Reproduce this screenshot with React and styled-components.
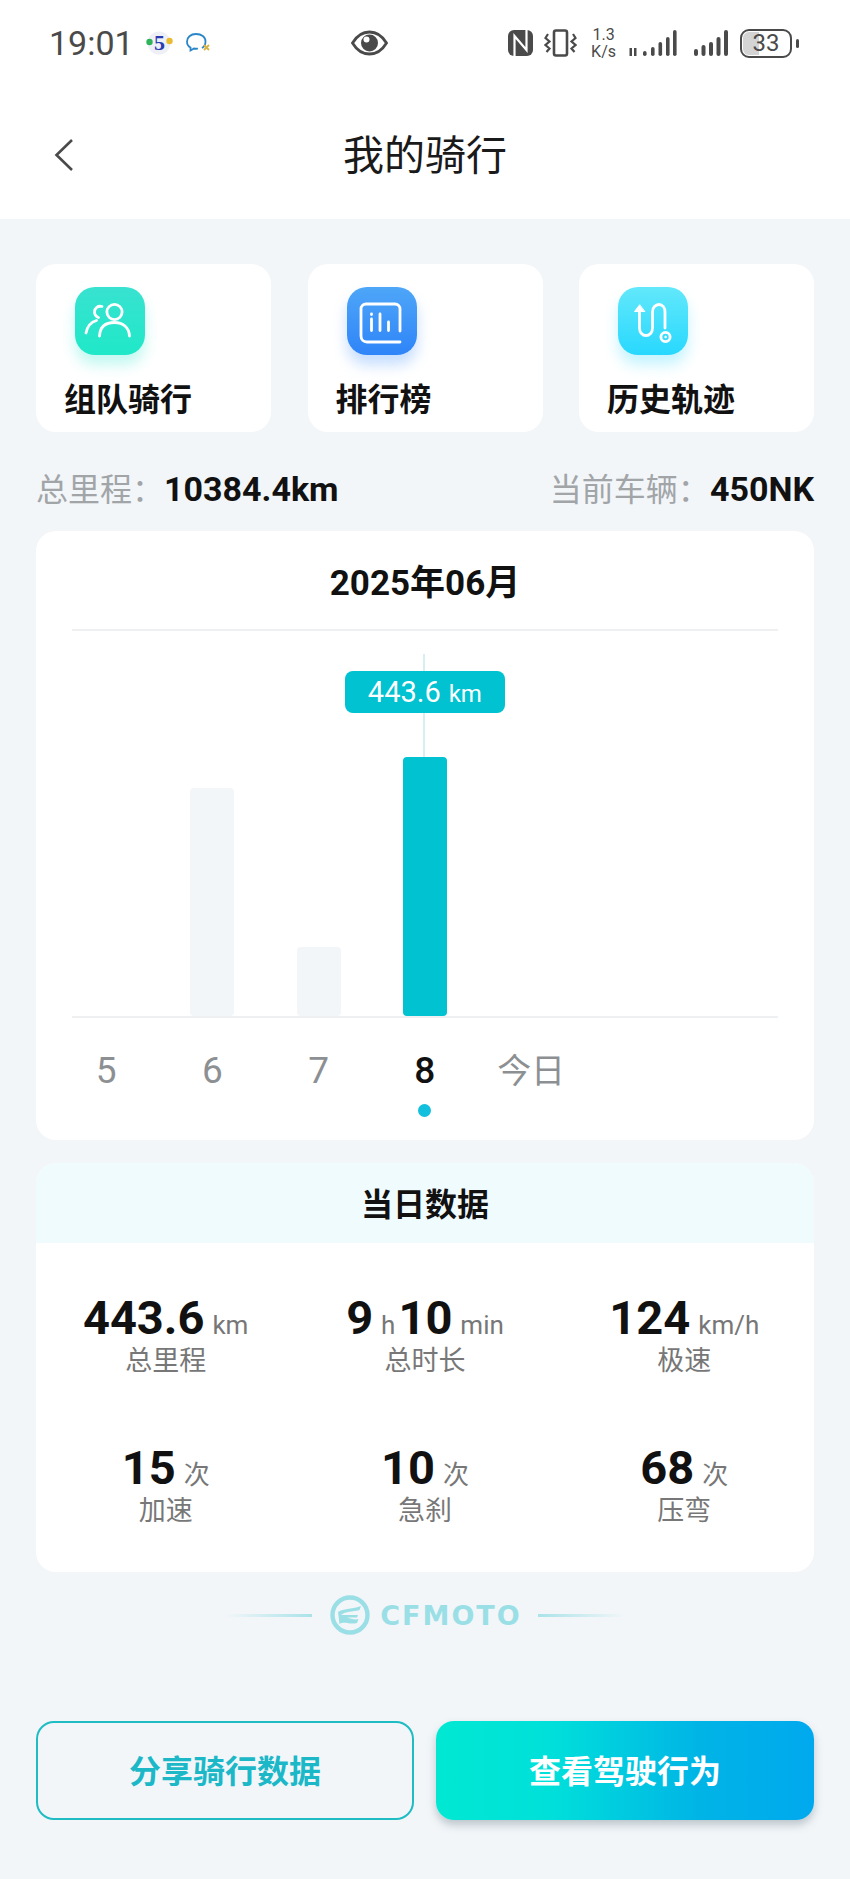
import React from "react";
import styled, { createGlobalStyle } from "styled-components";

const GlobalStyle = createGlobalStyle`
  html, body {
    margin: 0;
    padding: 0;
    background: #f2f6f9;
  }
  * {
    box-sizing: border-box;
  }
`;

const shortcuts = [
  { label: "组队骑行", kind: "group" },
  { label: "排行榜", kind: "rank" },
  { label: "历史轨迹", kind: "route" },
];

const bars = [
  { day: "5", height: 0 },
  { day: "6", height: 228 },
  { day: "7", height: 69 },
  { day: "8", height: 259, active: true },
  { day: "今日", height: 0, wide: true },
];

const stats = [
  { parts: [["443.6", "km"]], label: "总里程" },
  { parts: [["9", "h"], ["10", "min"]], label: "总时长" },
  { parts: [["124", "km/h"]], label: "极速" },
  { parts: [["15", "次"]], label: "加速" },
  { parts: [["10", "次"]], label: "急刹" },
  { parts: [["68", "次"]], label: "压弯" },
];

const gradients = {
  group: "linear-gradient(180deg, #38e2d0, #20e8c8)",
  rank: "linear-gradient(180deg, #4ea6f8, #2f84f8)",
  route: "linear-gradient(180deg, #62e8fb, #28d8fe)",
};

const glows = {
  group: "rgba(40, 230, 205, 0.28)",
  rank: "rgba(50, 135, 250, 0.28)",
  route: "rgba(45, 215, 255, 0.28)",
};

const ShortcutGlyph = ({ kind }) => {
  if (kind === "group") {
    return (
      <svg width="70" height="68" viewBox="0 0 70 68" fill="none" stroke="#fff" strokeWidth="2.8" strokeLinecap="round">
        <circle cx="39.5" cy="25" r="7.6" />
        <path d="M24.5 49C25 39.5 31 35.5 39.5 35.5C48 35.5 54 40.5 54.5 49" />
        <path d="M27 19.5C23 18.5 19.5 21 19.5 25C19.5 27.5 21 29.5 23.5 30.5" />
        <path d="M11 46C12.5 38.5 16 35 21.5 33.5" />
      </svg>
    );
  }
  if (kind === "rank") {
    return (
      <svg width="70" height="68" viewBox="0 0 70 68" fill="none" stroke="#fff" strokeWidth="2.8" strokeLinecap="round">
        <path d="M53 44V22C53 19 51 17 48 17H19C16 17 14 19 14 22V49C14 52.5 16.5 55 20 55H53" />
        <path d="M24.5 32V43.5M33 27V43.5M41.5 35V43.5" />
        <path d="M24.5 27V27.5" />
      </svg>
    );
  }
  return (
    <svg width="70" height="68" viewBox="0 0 70 68" fill="none" stroke="#fff" strokeWidth="2.8" strokeLinecap="round">
      <path d="M21.5 24V41C21.5 45.5 24.5 48.5 28 48.5C31.5 48.5 34.5 45.5 34.5 41V25C34.5 20.5 37.5 17.5 41 17.5C44.5 17.5 47 20.5 47 25V41" />
      <path d="M21.5 18L16.5 24.5H26.5Z" fill="#fff" strokeWidth="1" strokeLinejoin="round" />
      <circle cx="47.5" cy="50" r="4.6" />
      <circle cx="47.5" cy="50" r="0.8" fill="#fff" strokeWidth="1" />
    </svg>
  );
};

const StatusIcons = () => (
  <StatusRight>
    <StatusGlyph $gap={0}>
      <svg width="25" height="26" viewBox="0 0 25 26">
        <rect x="0" y="0" width="25" height="26" rx="6" fill="#4a4a4a" />
        <path d="M6.5 26V6L18.5 20V0" fill="none" stroke="#fff" strokeWidth="2.2" />
      </svg>
    </StatusGlyph>
    <StatusGlyph $gap={11}>
      <svg width="33" height="28" viewBox="0 0 33 28" fill="none" stroke="#4a4a4a">
        <rect x="10" y="1.5" width="13" height="25" rx="2" strokeWidth="2.6" />
        <path d="M4 5L1.5 9L5.5 12.5L1.5 16L5.5 19.5L2.5 23M29 5L31.5 9L27.5 12.5L31.5 16L27.5 19.5L30.5 23" strokeWidth="2.2" />
      </svg>
    </StatusGlyph>
    <StatusGlyph $gap={14}>
      <NetSpeed>
        <span>1.3</span>
        <span>K/s</span>
      </NetSpeed>
    </StatusGlyph>
    <StatusGlyph $gap={13}>
      <svg width="48" height="28" viewBox="0 0 48 28" fill="#4a4a4a">
        <rect x="0.5" y="19" width="2.5" height="8" />
        <rect x="5" y="19" width="2.5" height="8" />
        <rect x="14" y="22" width="3.6" height="5" rx="1.8" />
        <rect x="22" y="18" width="3.6" height="9" rx="1.8" />
        <rect x="29.5" y="13" width="3.6" height="14" rx="1.8" />
        <rect x="37" y="8" width="3.6" height="19" rx="1.8" />
        <rect x="44" y="1" width="3.6" height="26" rx="1.8" />
      </svg>
    </StatusGlyph>
    <StatusGlyph $gap={17}>
      <svg width="35" height="28" viewBox="0 0 35 28" fill="#4a4a4a">
        <rect x="0" y="20" width="4" height="7" rx="2" />
        <rect x="7.5" y="16" width="4" height="11" rx="2" />
        <rect x="15" y="13" width="4" height="14" rx="2" />
        <rect x="22.5" y="8" width="4" height="19" rx="2" />
        <rect x="30" y="1" width="4" height="26" rx="2" />
      </svg>
    </StatusGlyph>
    <StatusGlyph $gap={11}>
      <Battery>
        <BatteryFill />
        <BatteryLevel>33</BatteryLevel>
        <BatteryNub />
      </Battery>
    </StatusGlyph>
  </StatusRight>
);

const App = () => {
  return (
    <Page>
      <GlobalStyle />
      <Header>
        <StatusBar>
          <StatusLeft>
            <Clock>19:01</Clock>
            <svg width="27" height="26" viewBox="0 0 27 26">
              <circle cx="13" cy="13" r="11.5" fill="#eef0f6" />
              <circle cx="3.5" cy="12" r="3.2" fill="#2fb45a" />
              <circle cx="23.5" cy="11" r="3.2" fill="#e8bb30" />
              <text x="13.5" y="20" textAnchor="middle" fontFamily="Liberation Serif" fontWeight="700" fontSize="22" fill="#2a3bb0">5</text>
            </svg>
            <svg width="25" height="22" viewBox="0 0 25 22" fill="none">
              <path d="M17 16C19.5 14.5 20.5 12 20.5 9.5C20.5 5 16.5 2 11 2C5.5 2 2 5.5 2 9.5C2 12.5 3.5 14.5 5.5 15.5V18.5L9 16.5C10.5 16.8 12 16.8 13 16.5" stroke="#2a86c8" strokeWidth="1.8" />
              <path d="M19 13L24 18M24 13L19 18" stroke="#d9b340" strokeWidth="1.8" />
            </svg>
          </StatusLeft>
          <EyeSlot>
            <svg width="37" height="26" viewBox="0 0 37 26">
              <path d="M1.5 13C6 5.5 12 2 18.5 2C25 2 31 5.5 35.5 13C31 20.5 25 24 18.5 24C12 24 6 20.5 1.5 13Z" fill="none" stroke="#4a4a4a" strokeWidth="2.8" />
              <circle cx="18.5" cy="13" r="8.5" fill="#4a4a4a" />
              <circle cx="15.5" cy="9.5" r="3" fill="#fff" />
            </svg>
          </EyeSlot>
          <StatusIcons />
        </StatusBar>
        <NavBar>
          <BackButton aria-label="返回">
            <svg width="20" height="34" viewBox="0 0 20 34" fill="none">
              <path d="M18 2L2.5 17L18 32" stroke="#4a4a4a" strokeWidth="2.6" />
            </svg>
          </BackButton>
          <Title>我的骑行</Title>
        </NavBar>
      </Header>

      <Main>
        <Shortcuts>
          {shortcuts.map((item) => (
            <Shortcut key={item.kind}>
              <ShortcutIcon $kind={item.kind}>
                <ShortcutGlyph kind={item.kind} />
              </ShortcutIcon>
              <ShortcutLabel>{item.label}</ShortcutLabel>
            </Shortcut>
          ))}
        </Shortcuts>

        <Summary>
          <div>
            <SummaryKey>总里程：</SummaryKey>
            <SummaryValue>10384.4km</SummaryValue>
          </div>
          <div>
            <SummaryKey>当前车辆：</SummaryKey>
            <SummaryValue>450NK</SummaryValue>
          </div>
        </Summary>

        <ChartCard>
          <ChartTitle>2025年06月</ChartTitle>
          <Plot>
            <BarRow>
              {bars.map((bar) => (
                <BarColumn key={bar.day}>
                  <Bar $height={bar.height} $active={bar.active}>
                    {bar.active && (
                      <>
                        <Guide />
                        <Tip>
                          443.6<TipUnit>km</TipUnit>
                        </Tip>
                      </>
                    )}
                  </Bar>
                </BarColumn>
              ))}
            </BarRow>
          </Plot>
          <Days>
            {bars.map((bar) => (
              <Day key={bar.day} $active={bar.active} $wide={bar.wide}>
                {bar.day}
                {bar.active && <DayDot />}
              </Day>
            ))}
          </Days>
        </ChartCard>

        <DataCard>
          <DataHeader>当日数据</DataHeader>
          <StatGrid>
            {stats.map((stat) => (
              <Stat key={stat.label}>
                <StatValue>
                  {stat.parts.map(([num, unit]) => (
                    <StatPart key={unit}>
                      <StatNumber>{num}</StatNumber>
                      <StatUnit>{unit}</StatUnit>
                    </StatPart>
                  ))}
                </StatValue>
                <StatLabel>{stat.label}</StatLabel>
              </Stat>
            ))}
          </StatGrid>
        </DataCard>

        <Brand>
          <BrandLine />
          <svg width="40" height="40" viewBox="0 0 40 40" fill="none">
            <circle cx="20" cy="20" r="17.5" stroke="#9bdfe6" strokeWidth="4.4" />
            <path d="M8 17C14 13 20 15 31 11L29.5 15C22 17 16 16 11 20H28L27 22.5H11.5C16 20.5 22 26 28.5 24L27 28C20 30 15 26 9.5 29Z" fill="#9bdfe6" />
          </svg>
          <BrandName>CFMOTO</BrandName>
          <BrandLine $flip />
        </Brand>

        <Actions>
          <OutlineButton>分享骑行数据</OutlineButton>
          <FilledButton>查看驾驶行为</FilledButton>
        </Actions>
      </Main>
    </Page>
  );
};

export default App;

const Page = styled.div`
  width: 850px;
  height: 1879px;
  overflow: hidden;
  background: #f2f6f9;
  font-family: Roboto, "Noto Sans CJK SC", sans-serif;
  color: #111;
`;

const Header = styled.header`
  background: #fff;
  height: 219px;
`;

const StatusBar = styled.div`
  height: 86px;
  padding: 0 52px 0 49px;
  display: grid;
  grid-template-columns: 302px auto 1fr;
  align-items: center;
`;

const StatusLeft = styled.div`
  display: flex;
  align-items: center;
  gap: 12px;
`;

const Clock = styled.span`
  font-size: 34px;
  color: #4a4a4a;
`;

const EyeSlot = styled.div`
  display: flex;
  align-items: center;
`;

const StatusRight = styled.div`
  display: flex;
  align-items: center;
  justify-content: flex-end;
`;

const StatusGlyph = styled.span`
  display: flex;
  align-items: center;
  margin-left: ${(p) => p.$gap}px;
`;

const NetSpeed = styled.div`
  display: flex;
  flex-direction: column;
  align-items: center;
  font-size: 16px;
  line-height: 17px;
  color: #4a4a4a;
`;

const Battery = styled.div`
  position: relative;
  width: 52px;
  height: 29px;
  border: 2px solid #4a4a4a;
  border-radius: 9px;
  margin-right: 6px;
  display: flex;
  align-items: center;
  justify-content: center;
`;

const BatteryFill = styled.div`
  position: absolute;
  left: 1px;
  top: 1px;
  bottom: 1px;
  width: 33%;
  background: #d4d4d4;
  border-radius: 6px 0 0 6px;
`;

const BatteryLevel = styled.span`
  position: relative;
  font-size: 24px;
  color: #4a4a4a;
`;

const BatteryNub = styled.div`
  position: absolute;
  right: -9px;
  top: 8px;
  width: 3px;
  height: 9px;
  border-radius: 2px;
  background: #4a4a4a;
`;

const NavBar = styled.div`
  position: relative;
  height: 133px;
  padding-bottom: 2px;
  display: flex;
  align-items: center;
  justify-content: center;
`;

const BackButton = styled.div`
  position: absolute;
  left: 54px;
  top: 52px;
  line-height: 0;
`;

const Title = styled.h1`
  margin: 0;
  font-size: 41px;
  font-weight: 400;
  color: #1a1a1a;
`;

const Main = styled.main`
  padding: 45px 36px 0;
`;

const Shortcuts = styled.div`
  display: grid;
  grid-template-columns: repeat(3, 235px);
  justify-content: space-between;
`;

const Shortcut = styled.div`
  height: 168px;
  background: #fff;
  border-radius: 20px;
  padding: 23px 28px 0;
`;

const ShortcutIcon = styled.div`
  width: 70px;
  height: 68px;
  margin-left: 11px;
  border-radius: 20px;
  background: ${(p) => gradients[p.$kind]};
  box-shadow: 0 10px 14px ${(p) => glows[p.$kind]};
`;

const ShortcutLabel = styled.div`
  margin-top: 23px;
  font-size: 32px;
  line-height: 44px;
  font-weight: 700;
  color: #111;
  white-space: nowrap;
`;

const Summary = styled.div`
  height: 99px;
  padding-top: 10px;
  display: flex;
  justify-content: space-between;
  align-items: center;
  white-space: nowrap;
`;

const SummaryKey = styled.span`
  font-size: 32px;
  color: #a2a5a8;
`;

const SummaryValue = styled.span`
  font-size: 34px;
  font-weight: 700;
  color: #111;
`;

const ChartCard = styled.section`
  height: 609px;
  background: #fff;
  border-radius: 20px;
`;

const ChartTitle = styled.div`
  height: 98px;
  padding-bottom: 2px;
  display: flex;
  align-items: center;
  justify-content: center;
  font-size: 35px;
  font-weight: 700;
  color: #111;
`;

const Plot = styled.div`
  height: 389px;
  margin: 0 36px;
  border-top: 2px solid #eef0f2;
  border-bottom: 2px solid #eef0f2;
`;

const BarRow = styled.div`
  height: 100%;
  margin-left: -19px;
  display: flex;
  align-items: flex-end;
`;

const BarColumn = styled.div`
  width: 106.25px;
  flex: none;
  display: flex;
  justify-content: center;
`;

const Bar = styled.div`
  position: relative;
  width: 44px;
  height: ${(p) => p.$height}px;
  border-radius: 4px;
  background: ${(p) => (p.$active ? "#00c2d1" : "#f3f6f9")};
`;

const Guide = styled.div`
  position: absolute;
  left: 50%;
  bottom: 100%;
  width: 2px;
  height: 103px;
  margin-left: -2px;
  background: #d9eef2;
`;

const Tip = styled.div`
  position: absolute;
  left: 50%;
  bottom: calc(100% + 44px);
  transform: translateX(-50%);
  width: 160px;
  height: 42px;
  border-radius: 8px;
  background: #00c2d1;
  color: #fff;
  font-size: 29px;
  line-height: 42px;
  text-align: center;
  white-space: nowrap;
`;

const TipUnit = styled.span`
  font-size: 24px;
  margin-left: 8px;
`;

const Days = styled.div`
  display: flex;
  padding: 28px 0 0 17px;
`;

const Day = styled.div`
  position: relative;
  width: 106.25px;
  flex: none;
  text-align: center;
  font-size: ${(p) => (p.$wide ? 34 : 37)}px;
  line-height: 50px;
  font-weight: ${(p) => (p.$active ? 500 : 400)};
  color: ${(p) => (p.$active ? "#111" : "#8d9093")};
`;

const DayDot = styled.div`
  position: absolute;
  left: 50%;
  top: 58px;
  width: 13px;
  height: 13px;
  margin-left: -6.5px;
  border-radius: 50%;
  background: #12bfdc;
`;

const DataCard = styled.section`
  height: 409px;
  margin-top: 23px;
  background: #fff;
  border-radius: 20px;
  overflow: hidden;
`;

const DataHeader = styled.div`
  height: 80px;
  padding-bottom: 2px;
  background: #f0fbfd;
  display: flex;
  align-items: center;
  justify-content: center;
  font-size: 32px;
  font-weight: 700;
  color: #111;
`;

const StatGrid = styled.div`
  display: grid;
  grid-template-columns: repeat(3, 1fr);
  row-gap: 63px;
  padding-top: 47px;
`;

const Stat = styled.div`
  display: flex;
  flex-direction: column;
  align-items: center;
`;

const StatValue = styled.div`
  display: flex;
  align-items: baseline;
  height: 55px;
  line-height: 56px;
  white-space: nowrap;
`;

const StatPart = styled.span`
  & + & {
    margin-left: 3px;
  }
`;

const StatNumber = styled.span`
  font-size: 47px;
  font-weight: 700;
  color: #111;
`;

const StatUnit = styled.span`
  font-size: 26px;
  color: #777;
  margin-left: 8px;
`;

const StatLabel = styled.div`
  font-size: 27px;
  line-height: 32px;
  color: #777;
`;

const Brand = styled.div`
  height: 40px;
  margin-top: 23px;
  display: flex;
  align-items: center;
  justify-content: center;
  gap: 10px;
`;

const BrandLine = styled.div`
  width: 87px;
  height: 3px;
  margin: ${(p) => (p.$flip ? "0 0 0 6px" : "0 8px 0 0")};
  background: linear-gradient(
    ${(p) => (p.$flip ? "270deg" : "90deg")},
    rgba(155, 223, 230, 0),
    #a9e3e9
  );
`;

const BrandName = styled.span`
  font-family: "DejaVu Sans", sans-serif;
  font-size: 27px;
  font-weight: 700;
  letter-spacing: 2px;
  color: #9bdfe6;
`;

const Actions = styled.div`
  margin-top: 86px;
  display: grid;
  grid-template-columns: 378px 378px;
  justify-content: space-between;
`;

const OutlineButton = styled.button`
  height: 99px;
  padding: 0 0 3px;
  border: 2px solid #1fbcc4;
  border-radius: 18px;
  background: transparent;
  color: #1cb8c8;
  font-family: inherit;
  font-size: 32px;
  font-weight: 700;
`;

const FilledButton = styled.button`
  height: 99px;
  padding: 0 0 3px;
  border: 0;
  border-radius: 18px;
  background: linear-gradient(90deg, #00e8d2 0%, #00e0da 30%, #00b4e6 70%, #00a9ee 100%);
  box-shadow: 0 5px 8px rgba(90, 110, 120, 0.35);
  color: #fff;
  font-family: inherit;
  font-size: 32px;
  font-weight: 700;
`;
